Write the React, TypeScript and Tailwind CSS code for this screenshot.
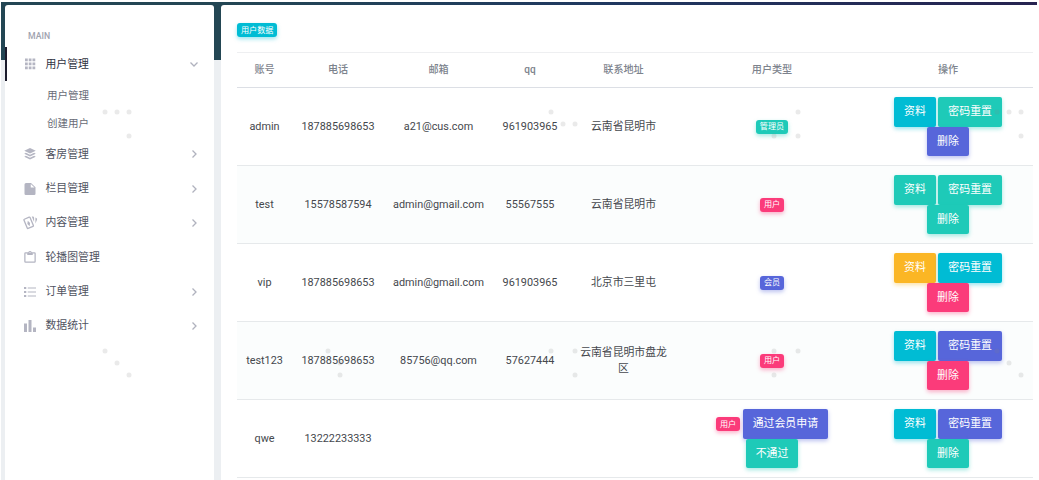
import type { ReactNode } from "react";

type Tone = "cyan" | "teal" | "indigo" | "pink" | "amber";

const btnTone: Record<Tone, string> = {
  cyan: "bg-[#00bcd4] shadow-[0_2px_4px_rgba(0,188,212,0.4)]",
  teal: "bg-[#1ecab8] shadow-[0_2px_4px_rgba(30,202,184,0.4)]",
  indigo: "bg-[#5766da] shadow-[0_2px_4px_rgba(87,102,218,0.4)]",
  pink: "bg-[#fb3b7a] shadow-[0_2px_4px_rgba(251,59,122,0.4)]",
  amber: "bg-[#fbb624] shadow-[0_2px_4px_rgba(251,182,36,0.4)]",
};

const icons: Record<string, ReactNode> = {
  grid: <path d="M2 1h5.5v5.5H2zM9.5 1H15v5.5H9.5zM17 1h5.5v5.5H17zM2 9h5.5v5.5H2zM9.5 9H15v5.5H9.5zM17 9h5.5v5.5H17zM2 17h5.5v5.5H2zM9.5 17H15v5.5H9.5zM17 17h5.5v5.5H17z" />,
  layers: (
    <path d="M12 0l11.5 5.5L12 11 .5 5.5zM3.8 9.7L12 13.5l8.2-3.8 3.3 1.6L12 16.8.5 11.3zM3.8 15.7L12 19.5l8.2-3.8 3.3 1.6L12 22.8.5 17.3z" />
  ),
  file: <path d="M4 0h10l9 8.5v13a2.5 2.5 0 0 1-2.5 2.5h-17A2.5 2.5 0 0 1 1 21.5V3a3 3 0 0 1 3-3zm9.5 2v7H21z" />,
  cards: (
    <path d="M11.19 2.25c-.26 0-.52.06-.77.15L3.06 5.45a2 2 0 0 0-1.09 2.6L6.93 20a2 2 0 0 0 2.6 1.1l7.37-3.05A2 2 0 0 0 18 15.45L13 3.5a2 2 0 0 0-1.81-1.25m3.48 0l3.45 8.35V4.25a2 2 0 0 0-2-2m4.01 1.54v9.03l2.43-5.86a2 2 0 0 0-1.09-2.6M11.19 4.22l4.98 12.02-7.39 3.06L3.8 7.29M8.65 8.54L8.06 13.41 11.5 17l.59-4.87z" />
  ),
  clipboard: (
    <path d="M21 2.5h-5.5a3.7 3.7 0 0 0-7 0H3A2.5 2.5 0 0 0 .5 5v16A2.5 2.5 0 0 0 3 23.5h18a2.5 2.5 0 0 0 2.5-2.5V5A2.5 2.5 0 0 0 21 2.5m-9-.5a1 1 0 1 1 0 2 1 1 0 0 1 0-2M6.5 5v3.2h11V5h3.5v16H3V5z" />
  ),
  list: <path d="M0 2h4.5v4H0zM0 10h4.5v4H0zM0 18h4.5v4H0zM7.5 3H24v2.2H7.5zM7.5 11H24v2.2H7.5zM7.5 19H24v2.2H7.5z" />,
  chart: <path d="M0 7h6v17H0zM9 0h6v24H9zM18 15h6v9h-6z" />,
};

function Chevron({ open }: { open?: boolean }) {
  return (
    <svg viewBox="0 0 10 10" className="w-2.5 h-2.5 ml-auto" fill="none" stroke="#b0b2be" strokeWidth="1.3">
      <path d={open ? "M1.5 3.5L5 7l3.5-3.5" : "M3.5 1.5L7 5 3.5 8.5"} />
    </svg>
  );
}

const menu = [
  { label: "客房管理", icon: "layers", arrow: true },
  { label: "栏目管理", icon: "file", arrow: true },
  { label: "内容管理", icon: "cards", arrow: true },
  { label: "轮播图管理", icon: "clipboard", arrow: false },
  { label: "订单管理", icon: "list", arrow: true },
  { label: "数据统计", icon: "chart", arrow: true },
];

function MenuItem({ label, icon, arrow, active }: { label: string; icon: string; arrow: boolean; active?: boolean }) {
  return (
    <div
      className={`h-[34.3px] flex items-center pl-4 pr-[15px] border-l-2 text-[10.85px] ${
        active ? "border-[#1b1b2c] text-[#30323f]" : "border-transparent text-[#50535f]"
      }`}
    >
      <span className="w-3.5 h-3 mr-[8.5px] flex items-center justify-center shrink-0">
        <svg viewBox="0 0 24 24" className={`shrink-0 ${icon === "cards" ? "w-4 h-4" : "w-3 h-3"}`} fill="#b4b5c2">
          {icons[icon]}
        </svg>
      </span>
      <span className="pt-px">{label}</span>
      {arrow && <Chevron open={active} />}
    </div>
  );
}

function Badge({ tone, children }: { tone: Tone; children: ReactNode }) {
  return (
    <span className={`inline-flex items-center h-3.5 px-1 rounded-[3px] text-[8.1px] leading-none text-white ${btnTone[tone]}`}>
      {children}
    </span>
  );
}

function Button({ tone, children }: { tone: Tone; children: ReactNode }) {
  return (
    <button className={`h-[29.5px] px-[10px] pt-0.5 rounded-[2px] text-[10.9px] leading-none text-white ${btnTone[tone]}`}>{children}</button>
  );
}

interface User {
  name: string;
  phone: string;
  email: string;
  qq: string;
  address: string;
  type: string;
  typeTone: Tone;
  tones: [Tone, Tone, Tone];
  pending?: boolean;
}

const users: User[] = [
  { name: "admin", phone: "187885698653", email: "a21@cus.com", qq: "961903965", address: "云南省昆明市", type: "管理员", typeTone: "teal", tones: ["cyan", "teal", "indigo"] },
  { name: "test", phone: "15578587594", email: "admin@gmail.com", qq: "55567555", address: "云南省昆明市", type: "用户", typeTone: "pink", tones: ["teal", "teal", "teal"] },
  { name: "vip", phone: "187885698653", email: "admin@gmail.com", qq: "961903965", address: "北京市三里屯", type: "会员", typeTone: "indigo", tones: ["amber", "cyan", "pink"] },
  { name: "test123", phone: "187885698653", email: "85756@qq.com", qq: "57627444", address: "云南省昆明市盘龙区", type: "用户", typeTone: "pink", tones: ["cyan", "indigo", "pink"] },
  { name: "qwe", phone: "13222233333", email: "", qq: "", address: "", type: "用户", typeTone: "pink", tones: ["cyan", "indigo", "teal"], pending: true },
];

const columns = ["账号", "电话", "邮箱", "qq", "联系地址", "用户类型", "操作"];
const cols = "grid grid-cols-[55px_92px_109px_74px_113px_184px_168px] items-center text-center";

// faint dots scattered over the whole page
const dots = [
  [105, 112], [117, 112], [129, 112], [129, 136], [105, 351], [117, 363], [129, 375],
  [551, 112], [563, 124], [575, 124], [774, 136], [798, 112], [798, 136],
  [997, 112], [1009, 112], [1021, 112], [1021, 136],
  [328, 351], [340, 363], [340, 375], [551, 351], [575, 351], [575, 375],
  [774, 351], [798, 351], [774, 375], [997, 351], [1009, 363], [1021, 375],
];

export default function App() {
  return (
    <div className="relative w-[1039px] h-[480px] overflow-hidden bg-white pt-0.5 pl-px pr-0.5 font-[Roboto,'Noto_Sans_CJK_SC',sans-serif]">
      <div className="h-full bg-[linear-gradient(to_right,#234654,#234654_220px,#1f3860_600px,#262350)]">
        <div className="h-full flex pl-1 pt-[3px] bg-[linear-gradient(transparent_58px,#eceff2_58px)]">
          {/* Sidebar */}
          <aside className="w-[209px] h-full shrink-0 bg-white rounded-t-[3px]">
            <p className="pt-[25px] pl-[23px] h-[42px] text-[8.7px] leading-[12px] font-medium text-[#a0a3af]">MAIN</p>
            <MenuItem label="用户管理" icon="grid" arrow active />
            <div className="pl-[42px] pt-[0.5px] h-[56px] text-[10.5px] text-[#686b76]">
              <p className="h-7 leading-7">用户管理</p>
              <p className="h-7 leading-7">创建用户</p>
            </div>
            {menu.map((item) => (
              <MenuItem key={item.label} {...item} />
            ))}
          </aside>

          {/* User table */}
          <main className="ml-[7px] flex-1 h-full bg-white rounded-tl-[3px] pl-4 pt-[18px]">
            <div className="h-[29px] flex items-start">
              <Badge tone="cyan">用户数据</Badge>
            </div>
            <div className="w-[796px]">
              <div className={`${cols} h-9 border-t border-b border-t-[#eeeff1] border-b-[#dcdfe5] text-[10.1px] text-[#7d838d]`}>
                {columns.map((c) => (
                  <span key={c} className="font-medium">{c}</span>
                ))}
              </div>
              {users.map((u, i) => (
                <div
                  key={u.name}
                  className={`${cols} h-[78px] border-b border-[#e6e9eb] text-[10.85px] leading-4 text-[#45484d] ${i % 2 ? "bg-[#fbfdfd]" : ""}`}
                >
                  <span>{u.name}</span>
                  <span>{u.phone}</span>
                  <span>{u.email}</span>
                  <span>{u.qq}</span>
                  <span className="px-[11px]">{u.address}</span>
                  <div className="flex flex-col items-center">
                    <div className="flex items-center gap-[2.5px]">
                      <Badge tone={u.typeTone}>{u.type}</Badge>
                      {u.pending && <Button tone="indigo">通过会员申请</Button>}
                    </div>
                    {u.pending && <Button tone="teal">不通过</Button>}
                  </div>
                  <div className="flex flex-col items-center">
                    <div className="flex gap-[2.5px]">
                      <Button tone={u.tones[0]}>资料</Button>
                      <Button tone={u.tones[1]}>密码重置</Button>
                    </div>
                    <Button tone={u.tones[2]}>删除</Button>
                  </div>
                </div>
              ))}
            </div>
          </main>
        </div>
      </div>
      <svg className="absolute inset-0 pointer-events-none" width="1039" height="480" fill="#808080" fillOpacity="0.17">
        {dots.map(([x, y]) => (
          <circle key={`${x}-${y}`} cx={x} cy={y} r="2.5" />
        ))}
      </svg>
    </div>
  );
}
